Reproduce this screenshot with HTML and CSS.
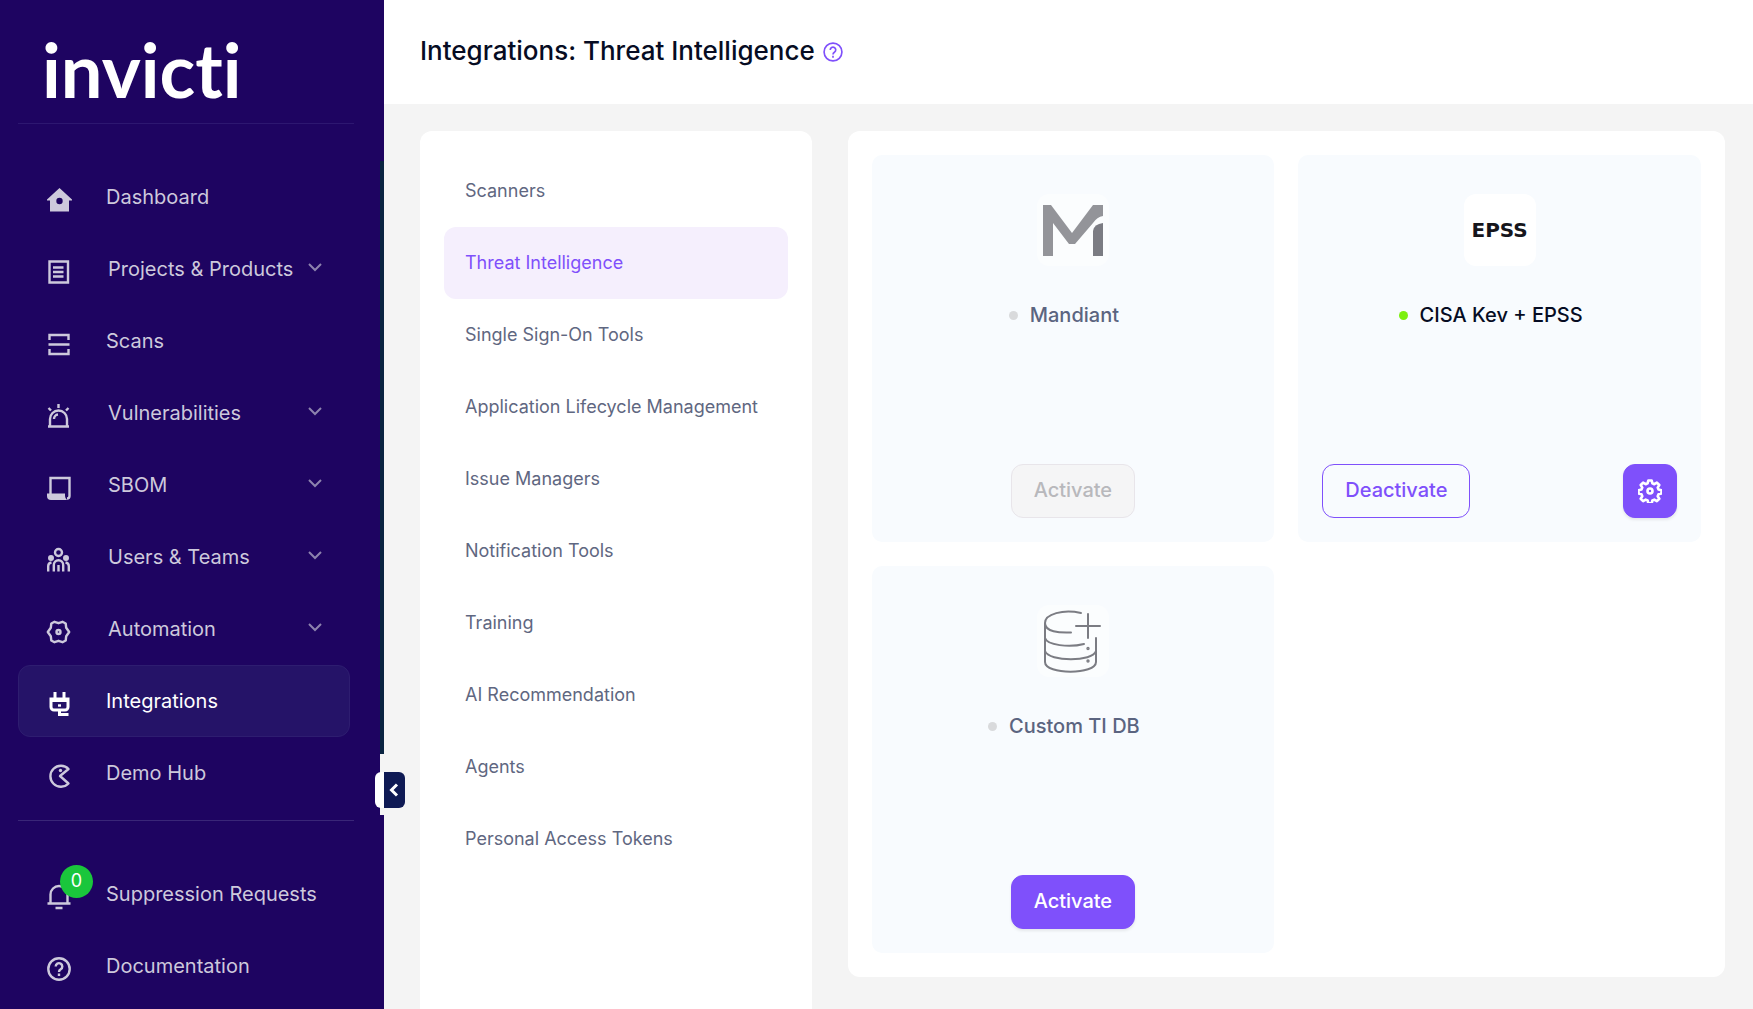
FILE: index.html
```html
<!DOCTYPE html>
<html lang="en">
<head>
    <meta charset="UTF-8">
    <meta name="viewport" content="width=device-width, initial-scale=1.0">
    <title>Integrations: Threat Intelligence</title>
    <link rel="stylesheet" href="styles.css">
</head>
<body>
    <aside class="sidebar">
        <a href="#" class="logo">invicti</a>

        <nav class="nav">
            <a href="#" class="nav-item">
                <svg class="icon" viewBox="0 0 24 24"><path fill="currentColor" stroke="none" fill-rule="evenodd" d="M12.500 0 0 11.500V12.500H3V23.500H22V12.500H25V11.500ZM12.500 9.800a3.200 3.200 0 1 1 0 6.400 3.200 3.200 0 0 1 0-6.400Z"/></svg>
                <span>Dashboard</span>
            </a>
            <button type="button" class="nav-item toggle">
                <svg class="icon" viewBox="0 0 24 24"><path d="M2.500 1.500h18.500v21h-18.500ZM6 7.500h10.500M6 12h10.500M6 16.500h10.500"/></svg>
                <span>Projects &amp; Products</span>
                <svg class="chevron" viewBox="0 0 14 10"><path d="M1 2l6 6 6-6"/></svg>
            </button>
            <a href="#" class="nav-item">
                <svg class="icon" viewBox="0 0 24 24"><path d="M2.500 8V3h19v5M1.500 12.500h21M2.500 17v5h19v-5"/></svg>
                <span>Scans</span>
            </a>
            <button type="button" class="nav-item toggle">
                <svg class="icon" viewBox="0 0 24 24"><path d="M1 22.500h21M3 22V15a8.500 8.500 0 0 1 17 0V22M11.500 0v4M1.500 4l2.500 2.500M21.500 4l-2.500 2.500M7 15a4.500 4.500 0 0 1 4-4.500"/></svg>
                <span>Vulnerabilities</span>
                <svg class="chevron" viewBox="0 0 14 10"><path d="M1 2l6 6 6-6"/></svg>
            </button>
            <button type="button" class="nav-item toggle">
                <svg class="icon" viewBox="0 0 24 24"><path d="M3.500 18V2h19v18a2.500 2.500 0 0 1-2.500 2.500"/><path fill="currentColor" stroke="none" d="M0 17.500H18V20q0 2 2 4H4Q0 24 0 20Z"/></svg>
                <span>SBOM</span>
                <svg class="chevron" viewBox="0 0 14 10"><path d="M1 2l6 6 6-6"/></svg>
            </button>
            <button type="button" class="nav-item toggle">
                <svg class="icon" viewBox="0 0 24 24"><circle cx="11.500" cy="4.500" r="3.500"/><circle cx="4" cy="10" r="1.800" fill="currentColor"/><circle cx="19" cy="10" r="1.800" fill="currentColor"/><path d="M6.800 23.500V17a4.700 4.700 0 0 1 9.400 0v6.500M11.500 17v6.500M1.200 23.500V18q0-3 3.300-3.500M21.800 23.500V18q0-3-3.300-3.500"/></svg>
                <span>Users &amp; Teams</span>
                <svg class="chevron" viewBox="0 0 14 10"><path d="M1 2l6 6 6-6"/></svg>
            </button>
            <button type="button" class="nav-item toggle">
                <svg class="icon" viewBox="0 0 24 24"><path stroke-linejoin="round" d="M7.500 1.800 11.500 3.200 15.500 1.800 18.700 3.500 19.200 7.800 22.200 12 19.200 16.200 18.700 20.500 15.500 22.200 11.500 20.800 7.500 22.200 4.300 20.500 3.800 16.200 0.800 12 3.800 7.800 4.300 3.500Z"/><circle cx="11.500" cy="12" r="2"/></svg>
                <span>Automation</span>
                <svg class="chevron" viewBox="0 0 14 10"><path d="M1 2l6 6 6-6"/></svg>
            </button>
            <a href="#" class="nav-item active" aria-current="page">
                <svg class="icon" viewBox="0 0 24 24"><path stroke-width="3" d="M8 0v6M17 0v6M4 7h17v8a3 3 0 0 1-3 3H7a3 3 0 0 1-3-3ZM4 8.500h17M12.500 18v4.500h9"/><path d="M11 13.500h3"/></svg>
                <span>Integrations</span>
            </a>
            <a href="#" class="nav-item">
                <svg class="icon" viewBox="0 0 24 24"><path stroke-linejoin="round" d="M21.500 5a10.500 10.500 0 1 0 0 14.500L13 12Z"/><circle cx="13.500" cy="6.500" r="1.700" fill="currentColor" stroke="none"/></svg>
                <span>Demo Hub</span>
            </a>
        </nav>

        <nav class="nav nav-bottom">
            <a href="#" class="nav-item">
                <span class="bell">
                    <svg class="icon" viewBox="0 0 24 24"><path d="M0.500 18.500h23M3.500 18V9.500a8.500 8.500 0 0 1 17 0V18M8.500 23h7"/></svg>
                    <span class="badge">0</span>
                </span>
                <span>Suppression Requests</span>
            </a>
            <a href="#" class="nav-item">
                <svg class="icon" viewBox="0 0 24 24"><circle cx="12" cy="12" r="10.700"/><path d="M8.700 9.500a3.300 3.300 0 1 1 5 2.800Q12 13.300 12 15M12 16.500v2.500"/></svg>
                <span>Documentation</span>
            </a>
        </nav>

        <div class="track"></div>
        <button type="button" class="collapse" aria-label="Collapse sidebar">
            <svg viewBox="0 0 10 14"><path d="M8 1.500 2.500 7 8 12.500"/></svg>
        </button>
    </aside>

    <main class="main">
        <header class="header">
            <h1>Integrations: Threat Intelligence</h1>
            <a href="#" class="help" aria-label="Help">
                <svg viewBox="0 0 24 24"><circle cx="12" cy="12" r="10.700"/><path d="M8.700 9.500a3.300 3.300 0 1 1 5 2.800Q12 13.300 12 15M12 16.500v2.500"/></svg>
            </a>
        </header>

        <div class="content">
            <nav class="panel categories">
                <a href="#">Scanners</a>
                <a href="#" class="selected">Threat Intelligence</a>
                <a href="#">Single Sign-On Tools</a>
                <a href="#">Application Lifecycle Management</a>
                <a href="#">Issue Managers</a>
                <a href="#">Notification Tools</a>
                <a href="#">Training</a>
                <a href="#">AI Recommendation</a>
                <a href="#">Agents</a>
                <a href="#">Personal Access Tokens</a>
            </nav>

            <section class="panel cards">
                <div class="card">
                    <div class="card-icon faded">
                        <svg viewBox="0 0 72 72"><path fill="#303036" d="M6 11H14L35 39 56 11H66V22Q60 23 56 29L38 50H32L16 29V62H6Z"/><path fill="#00000a" d="M56 62V37Q57 30 66 29V62Z"/></svg>
                    </div>
                    <h2><span class="dot"></span>Mandiant</h2>
                    <div class="actions">
                        <button type="button" class="btn" disabled>Activate</button>
                    </div>
                </div>

                <div class="card enabled">
                    <div class="card-icon"><span class="epss">EPSS</span></div>
                    <h2><span class="dot"></span>CISA Kev + EPSS</h2>
                    <div class="actions spread">
                        <button type="button" class="btn outline">Deactivate</button>
                        <button type="button" class="btn square" aria-label="Settings">
                            <svg viewBox="0 0 24 24"><path stroke-linejoin="round" d="M10.300 1.500h3.400l.7 2.900 1.900.8 2.600-1.600 2.400 2.400-1.600 2.600.8 1.900 2.900.7v3.400l-2.900.7-.8 1.900 1.600 2.600-2.400 2.400-2.600-1.600-1.900.8-.7 2.900h-3.400l-.7-2.900-1.900-.8-2.600 1.600-2.400-2.400 1.600-2.600-.8-1.900-2.900-.7v-3.400l2.900-.7.8-1.900L2.700 6l2.400-2.400 2.600 1.600 1.900-.8Z"/><circle cx="12" cy="12" r="2.500"/></svg>
                        </button>
                    </div>
                </div>

                <div class="card">
                    <div class="card-icon faded">
                        <svg viewBox="0 0 72 72" fill="none" stroke="#00000a" stroke-width="2" stroke-linecap="round"><path d="M44 8C26 4 8 9 8 18S22 28 34 27.500M8 18V57C8 70 59 70 59 57V33M8 33C10 40 32 43 47 39M8 46C12 57 56 57 59 46M51 9V33M39 21H63"/><circle cx="51" cy="43.500" r="0.700"/><circle cx="51" cy="56" r="0.700"/></svg>
                    </div>
                    <h2><span class="dot"></span>Custom TI DB</h2>
                    <div class="actions">
                        <button type="button" class="btn">Activate</button>
                    </div>
                </div>
            </section>
        </div>
    </main>
</body>
</html>
```
FILE: styles.css
```css
*{
    box-sizing: border-box;
}

body{
    margin: 0;
    display: flex;
    min-height: 100vh;
    background-color: #f4f4f4;
    font-family: Inter, "Liberation Sans", sans-serif;
    font-size: 20px;
}

a{
    text-decoration: none;
    color: inherit;
}

button{
    font: inherit;
    cursor: pointer;
}

svg{
    display: block;
}

/* sidebar */
.sidebar{
    position: relative;
    flex: 0 0 384px;
    padding: 0 30px 0 18px;
    background-color: #1e0461;
    color: #cdc9dc;
}

.logo{
    display: block;
    height: 124px;
    padding: 30px 0 0 24px;
    border-bottom: 1px solid #2d1770;
    color: #fff;
    font-family: Lato, sans-serif;
    font-size: 74px;
    font-weight: 700;
    font-variant-ligatures: none;
    line-height: 80px;
}

.nav{
    padding: 37px 0 11px;
}

.nav-bottom{
    border-top: 1px solid #3a2678;
}

.nav-item{
    display: flex;
    align-items: center;
    width: 332px;
    height: 72px;
    padding: 0 27px 0 28px;
    border: 1px solid transparent;
    border-radius: 12px;
    background: none;
    color: inherit;
    text-align: left;
    white-space: nowrap;
}

.nav-item.active{
    background-color: #251368;
    border-color: #2e1d70;
    color: #fff;
}

.icon{
    flex: none;
    overflow: visible;
    width: 24px;
    height: 24px;
    margin: 6px 35px 0 0;
    fill: none;
    stroke: currentColor;
    stroke-width: 2.4;
}

.toggle .icon{
    margin-right: 37px;
}

.chevron{
    width: 14px;
    height: 10px;
    margin: 0 0 4px auto;
    fill: none;
    stroke: #8d83ae;
    stroke-width: 2;
}

.bell{
    position: relative;
}

.badge{
    position: absolute;
    left: 13px;
    top: -14px;
    width: 33px;
    height: 33px;
    border-radius: 50%;
    background-color: #1ac63c;
    color: #fff;
    font-size: 18px;
    line-height: 32px;
    text-align: center;
}

/* scroll track on the sidebar edge, with the collapse handle over it */
.track{
    position: absolute;
    top: 161px;
    right: 0;
    width: 4px;
    height: 654px;
    border-bottom: 61px solid #f4f4f4;
    background-color: #0a2441;
}

.collapse{
    position: absolute;
    top: 772px;
    left: 375px;
    width: 30px;
    height: 36px;
    padding: 0 0 0 14px;
    border: 0;
    border-radius: 6px;
    background: linear-gradient(to right, #fff 9px, #0f1a54 9px);
}

.collapse svg{
    width: 10px;
    height: 14px;
    fill: none;
    stroke: #fff;
    stroke-width: 3;
}

/* main area */
.main{
    flex: 1;
    display: flex;
    flex-direction: column;
    min-width: 0;
}

.header{
    display: flex;
    align-items: center;
    gap: 8px;
    height: 104px;
    padding: 0 36px;
    background-color: #fff;
}

h1{
    margin: 0 0 4px;
    color: #060c23;
    font-size: 26px;
    font-weight: 500;
}

.help svg{
    width: 20px;
    height: 20px;
    fill: none;
    stroke: #7f50fb;
    stroke-width: 2;
}

.content{
    flex: 1;
    display: flex;
    align-items: flex-start;
    gap: 36px;
    padding: 27px 28px 0 36px;
}

.panel{
    padding: 24px;
    border-radius: 12px;
    background-color: #fff;
}

.categories{
    flex: 0 0 30%;
    align-self: stretch;
    border-radius: 12px 12px 0 0;
    font-size: 18px;
}

.categories a{
    display: block;
    padding: 0 21px;
    border-radius: 12px;
    color: #5f6781;
    line-height: 72px;
    white-space: nowrap;
}

.categories a.selected{
    background-color: #f5effd;
    color: #7f50fb;
}

.cards{
    flex: 1;
    display: grid;
    grid-template-columns: 1fr 1fr;
    gap: 24px;
}

.card{
    display: flex;
    flex-direction: column;
    align-items: center;
    min-height: 387px;
    padding: 39px 24px 24px;
    border-radius: 10px;
    background-color: #f8fbfe;
}

.card-icon{
    display: flex;
    align-items: center;
    justify-content: center;
    width: 72px;
    height: 72px;
    border-radius: 12px;
    background-color: #fff;
}

.card-icon.faded{
    opacity: 0.5;
}

.card-icon svg{
    width: 72px;
    height: 72px;
}

.epss{
    color: #16161c;
    font-family: "DejaVu Sans", sans-serif;
    font-size: 20px;
    font-weight: 700;
}

h2{
    display: flex;
    align-items: center;
    gap: 12px;
    margin: 37px 0 0;
    padding-right: 18px;
    color: #5b6480;
    font-size: 20px;
    font-weight: 500;
    line-height: 24px;
}

.dot{
    width: 9px;
    height: 9px;
    border-radius: 50%;
    background-color: #d9dadc;
}

.enabled h2{
    color: #060c23;
}

.enabled .dot{
    background-color: #7cf00f;
}

.actions{
    display: flex;
    justify-content: center;
    width: 100%;
    margin-top: auto;
}

.actions.spread{
    justify-content: space-between;
}

.btn{
    height: 54px;
    padding: 0 22px 2px;
    border: 1px solid #7f50fb;
    border-radius: 12px;
    background-color: #7f50fb;
    box-shadow: 0 2px 3px rgba(0, 0, 0, 0.08);
    color: #fff;
    font-weight: 500;
}

.btn.outline{
    background: none;
    box-shadow: none;
    color: #7f50fb;
}

.btn.square{
    width: 54px;
    padding: 0 14px;
}

.btn.square svg{
    width: 24px;
    height: 24px;
    fill: none;
    stroke: #fff;
    stroke-width: 2.6;
}

.btn:disabled{
    border-color: #e8e5ea;
    background-color: #f5f5f6;
    box-shadow: none;
    color: #b8b8bc;
}
```
